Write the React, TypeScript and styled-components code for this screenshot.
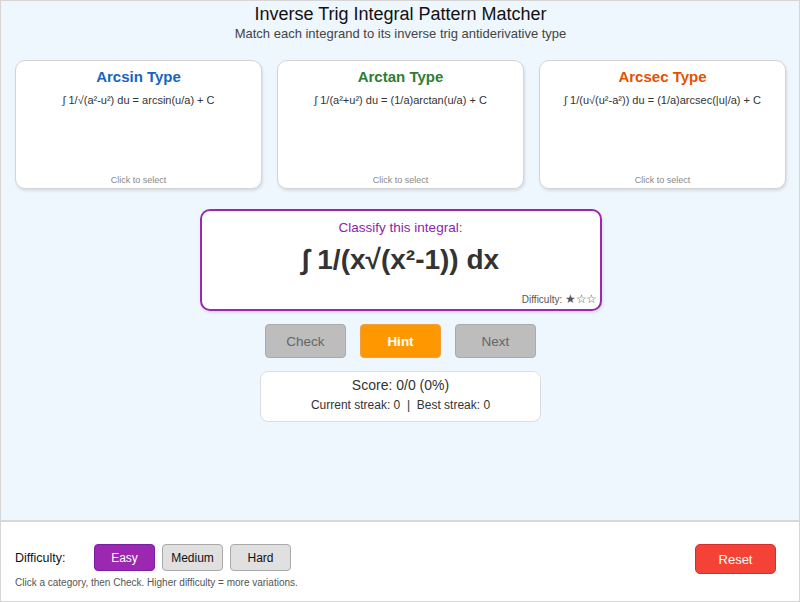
import React from "react";
import styled, { createGlobalStyle } from "styled-components";

const Global = createGlobalStyle`
  html, body { margin: 0; padding: 0; }
  body { font-family: "Liberation Sans", Arial, sans-serif; }
  * { box-sizing: border-box; }
`;

const Frame = styled.div`
  width: 800px;
  height: 602px;
  border: 1px solid #d6d6d6;
  display: flex;
  flex-direction: column;
  background: #eef6fe;
`;

const Main = styled.div`
  flex: 1;
  padding: 2px 13px 0 14px;
  display: flex;
  flex-direction: column;
  align-items: center;
`;

const Title = styled.h1`
  margin: 0;
  font-size: 18px;
  font-weight: normal;
  line-height: 22px;
  color: #111;
`;

const Subtitle = styled.div`
  font-size: 13px;
  line-height: 16px;
  margin-top: 1px;
  color: #444;
`;

const Cards = styled.div`
  align-self: stretch;
  display: grid;
  grid-template-columns: repeat(3, 1fr);
  gap: 15px;
  margin-top: 18px;
`;

const Card = styled.div`
  height: 129px;
  background: #fff;
  border: 1px solid #d4d4d4;
  border-radius: 10px;
  box-shadow: 1px 2px 3px rgba(0, 0, 0, 0.1);
  display: flex;
  flex-direction: column;
  align-items: center;
  padding-top: 7px;
  cursor: pointer;
`;

const CardTitle = styled.div<{ $color: string }>`
  font-size: 15px;
  font-weight: bold;
  line-height: 18px;
  color: ${(p) => p.$color};
`;

const Formula = styled.div`
  font-size: 11px;
  line-height: 14px;
  margin-top: 7px;
  color: #333;
`;

const CardHint = styled.div`
  margin-top: auto;
  margin-bottom: 2px;
  font-size: 9px;
  line-height: 12px;
  color: #888;
`;

const Question = styled.div`
  margin-top: 20px;
  width: 402px;
  height: 102px;
  background: #fff;
  border: 2px solid #9c27b0;
  border-radius: 10px;
  box-shadow: 1px 2px 3px rgba(0, 0, 0, 0.1);
  display: flex;
  flex-direction: column;
  align-items: center;
  padding-top: 9px;
`;

const QLabel = styled.div`
  font-size: 13.5px;
  line-height: 16px;
  color: #8e24aa;
`;

const QFormula = styled.div`
  font-size: 28px;
  font-weight: bold;
  line-height: 32px;
  margin-top: 8px;
  color: #333;
`;

const QDifficulty = styled.div`
  align-self: flex-end;
  margin-top: auto;
  margin-right: 3px;
  margin-bottom: 3px;
  font-size: 10px;
  line-height: 12px;
  color: #555;
`;

const Stars = styled.span`
  font-size: 12px;
  letter-spacing: -0.5px;
`;

const ButtonRow = styled.div`
  display: flex;
  gap: 14px;
  margin-top: 13px;
`;

const ActionButton = styled.button<{ $active?: boolean }>`
  width: 81px;
  height: 34px;
  border-radius: 4px;
  font-family: inherit;
  font-size: 13.5px;
  border: 1px solid ${(p) => (p.$active ? "#f0a040" : "#aaa")};
  background: ${(p) => (p.$active ? "#ff9800" : "#bdbdbd")};
  color: ${(p) => (p.$active ? "#fff" : "#666")};
  font-weight: ${(p) => (p.$active ? "bold" : "normal")};
`;

const ScoreBox = styled.div`
  margin-top: 13px;
  width: 281px;
  height: 51px;
  background: #fff;
  border: 1px solid #ddd;
  border-radius: 8px;
  display: flex;
  flex-direction: column;
  align-items: center;
  padding-top: 5px;
`;

const ScoreLine = styled.div`
  font-size: 14px;
  line-height: 17px;
  color: #333;
`;

const StreakLine = styled.div`
  font-size: 12px;
  line-height: 14px;
  margin-top: 4px;
  color: #333;
`;

const Footer = styled.div`
  height: 81px;
  background: #fff;
  border-top: 2px solid #d8d8d8;
  display: flex;
  align-items: flex-start;
  justify-content: space-between;
  padding: 22px 23px 0 14px;
`;

const FooterLeft = styled.div`
  display: flex;
  flex-direction: column;
`;

const DiffRow = styled.div`
  display: flex;
  align-items: center;
`;

const DiffLabel = styled.span`
  width: 79px;
  font-size: 12.5px;
  color: #111;
`;

const DiffButtons = styled.div`
  display: flex;
  gap: 7px;
`;

const DiffButton = styled.button<{ $active?: boolean }>`
  width: 61px;
  height: 27px;
  border-radius: 4px;
  font-family: inherit;
  font-size: 12px;
  border: 1px solid ${(p) => (p.$active ? "#7b1fa2" : "#aaa")};
  background: ${(p) => (p.$active ? "#9c27b0" : "#e0e0e0")};
  color: ${(p) => (p.$active ? "#fff" : "#111")};
`;

const HelpText = styled.div`
  margin-top: 6px;
  font-size: 10px;
  line-height: 12px;
  color: #555;
`;

const ResetButton = styled.button`
  width: 81px;
  height: 30px;
  border-radius: 5px;
  font-family: inherit;
  font-size: 13px;
  border: 1px solid #d32f2f;
  background: #f44336;
  color: #fff;
`;

const categories = [
  { title: "Arcsin Type", color: "#1565c0", formula: "∫ 1/√(a²-u²) du = arcsin(u/a) + C" },
  { title: "Arctan Type", color: "#2e7d32", formula: "∫ 1/(a²+u²) du = (1/a)arctan(u/a) + C" },
  { title: "Arcsec Type", color: "#e65100", formula: "∫ 1/(u√(u²-a²)) du = (1/a)arcsec(|u|/a) + C" },
];

export default function App() {
  return (
    <>
      <Global />
      <Frame>
        <Main>
          <Title>Inverse Trig Integral Pattern Matcher</Title>
          <Subtitle>Match each integrand to its inverse trig antiderivative type</Subtitle>
          <Cards>
            {categories.map((c) => (
              <Card key={c.title}>
                <CardTitle $color={c.color}>{c.title}</CardTitle>
                <Formula>{c.formula}</Formula>
                <CardHint>Click to select</CardHint>
              </Card>
            ))}
          </Cards>
          <Question>
            <QLabel>Classify this integral:</QLabel>
            <QFormula>∫ 1/(x√(x²-1)) dx</QFormula>
            <QDifficulty>
              Difficulty: <Stars>★☆☆</Stars>
            </QDifficulty>
          </Question>
          <ButtonRow>
            <ActionButton>Check</ActionButton>
            <ActionButton $active>Hint</ActionButton>
            <ActionButton>Next</ActionButton>
          </ButtonRow>
          <ScoreBox>
            <ScoreLine>Score: 0/0 (0%)</ScoreLine>
            <StreakLine>Current streak: 0 &nbsp;|&nbsp; Best streak: 0</StreakLine>
          </ScoreBox>
        </Main>
        <Footer>
          <FooterLeft>
            <DiffRow>
              <DiffLabel>Difficulty:</DiffLabel>
              <DiffButtons>
                <DiffButton $active>Easy</DiffButton>
                <DiffButton>Medium</DiffButton>
                <DiffButton>Hard</DiffButton>
              </DiffButtons>
            </DiffRow>
            <HelpText>Click a category, then Check. Higher difficulty = more variations.</HelpText>
          </FooterLeft>
          <ResetButton>Reset</ResetButton>
        </Footer>
      </Frame>
    </>
  );
}
